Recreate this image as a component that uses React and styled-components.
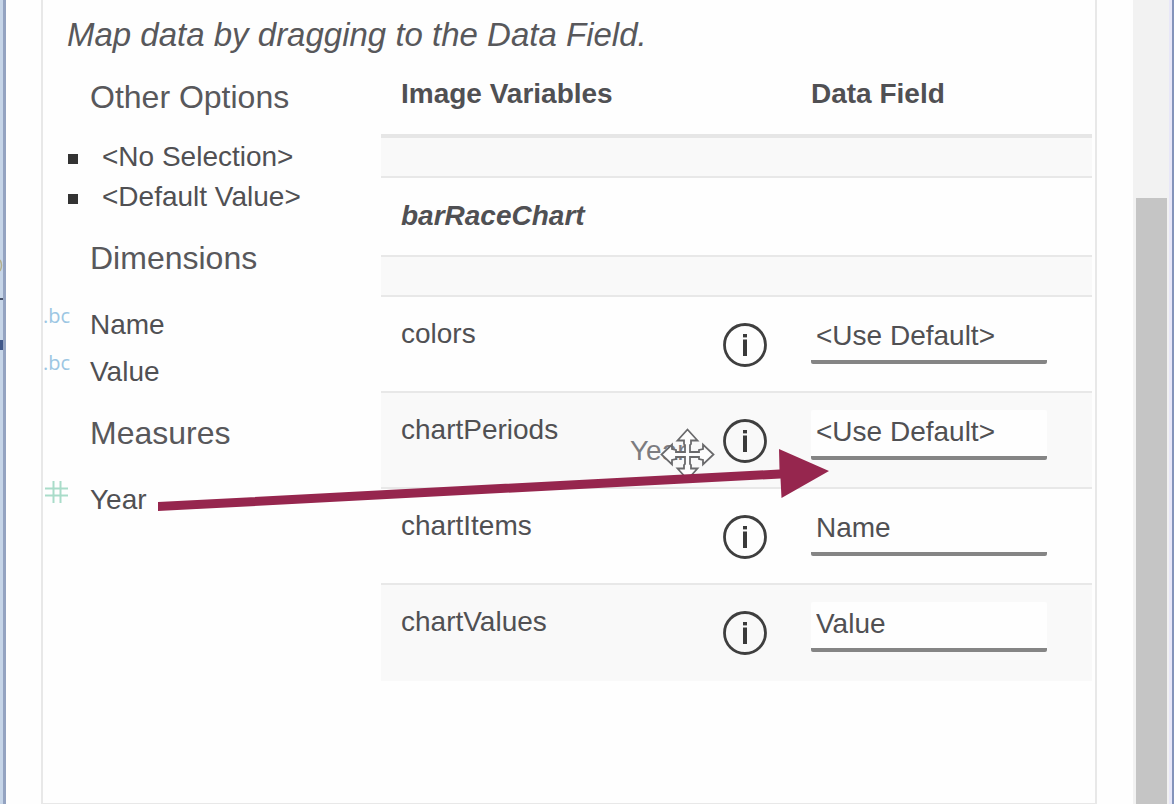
import styled, { createGlobalStyle } from "styled-components";
import { useState } from "react";


// ------- STYLES ---------
const GlobalStyle = createGlobalStyle`
* {
    box-sizing: border-box;
}

body {
    margin: 0;
    background-color: #fefefe;
    color: #505053;
    font-family: "Liberation Sans", Arial, sans-serif;
    font-size: 28px;
    line-height: 40px;
}
`
const Page = styled.div`
display: flex;
min-height: 100vh;
`
const LeftEdge = styled.div`
position: relative;
width: 6px;
background-color: #c6d5e8;
border-right: 3px solid #94a3c1;
`
const RightEdge = styled.div`
width: 5px;
background-color: #e8e7f8;
border-right: 2px solid #8494bb;
`
const Panel = styled.main`
position: relative;
flex: 1;
min-width: 0;
margin: 0 36px 0 35px;
padding: 15px 3px 0 0;
border: 2px solid #e8e8e8;
border-top: none;
border-bottom-width: 1px;
`
const Hint = styled.p`
margin: 0 0 0 24px;
color: #58585b;
font-size: 33px;
font-style: italic;
`
const Columns = styled.div`
display: flex;
align-items: flex-start;
`
const Sidebar = styled.aside`
flex: 0 0 338px;
padding-top: 4px;
`
const GroupTitle = styled.h2`
margin: 18px 0 20px 47px;
color: #58585b;
font-size: 32px;
font-weight: normal;
`
const OptionList = styled.ul`
margin: 0;
padding: 0 0 3px;
list-style: none;
`
const FieldList = styled.ul`
margin: 0;
padding: 3px 0 0;
list-style: none;
`
const Option = styled.li`
display: flex;
align-items: center;
gap: 24px;
padding-left: 25px;

&::before {
    content: "";
    width: 10px;
    height: 10px;
    margin-top: 4px;
    background-color: #333;
}
`
const Field = styled.li`
display: flex;
gap: 21px;
line-height: 47px;
cursor: move;
`
const FieldType = styled.span`
width: 26px;
color: ${props => props.$color};
font-family: "Open Sans", sans-serif;
font-size: 20px;
line-height: 30px;
text-align: right;

svg {
    display: block;
    margin-left: auto;
}
`
const Table = styled.table`
flex: 1;
border-collapse: separate;
border-spacing: 0;
table-layout: fixed;
`
const HeadCell = styled.th`
width: ${props => props.$width || "auto"};
padding: 19px 20px 20px;
border-bottom: 4px solid #e6e6e6;
text-align: left;
`
const Row = styled.tr`
background-color: ${props => props.$shaded ? "#f9f9f9" : "transparent"};

&:last-child td {
    border-bottom-color: transparent;
}
`
const SpacerCell = styled.td`
height: 40px;
padding: 0;
border-bottom: 2px solid #e8e8e8;
`
const GroupCell = styled.th`
padding: 18px 20px 19px;
border-bottom: 2px solid #e8e8e8;
font-style: italic;
text-align: left;
`
const Cell = styled.td`
height: 96px;
padding: ${props => props.$padding || "17px 20px"};
border-bottom: 2px solid #e8e8e8;
vertical-align: top;
`
const InfoButton = styled.button`
display: block;
padding: 0;
border: none;
background: none;
cursor: pointer;

svg {
    display: block;
}
`
const DropInput = styled.input`
display: block;
width: 100%;
height: 50px;
padding: 0 5px 2px;
border: none;
border-bottom: 4px solid #858585;
border-radius: 2px;
background-color: #fefefe;
color: inherit;
font: inherit;
`
const Track = styled.div`
width: 36px;
padding: 198px 2px 0 3px;
background-color: #f2f2f2;
`
const Thumb = styled.div`
height: 100%;
background-color: #c5c5c5;
`
const DragGhost = styled.span`
position: absolute;
top: 431px;
left: 587px;
color: #7c7c80;
`
const Overlay = styled.svg`
position: absolute;
top: 0;
left: 0;
overflow: visible;
pointer-events: none;
`

// -------------------------


const variables = [
    { name: "colors", value: "<Use Default>" },
    { name: "chartPeriods", value: "<Use Default>" },
    { name: "chartItems", value: "Name" },
    { name: "chartValues", value: "Value" },
]

function InfoIcon() {
    return (
        <svg width="44" height="44" viewBox="0 0 44 44">
            <circle cx="22" cy="22" r="20.5" fill="none" stroke="#3f3f3f" strokeWidth="2.8" />
            <rect x="20" y="11" width="4" height="3.4" fill="#3a3a3a" />
            <rect x="20" y="16.5" width="4" height="16.5" fill="#3a3a3a" />
        </svg>
    )
}

function HashIcon() {
    return (
        <svg width="24" height="30" viewBox="0 0 24 30" stroke="#a9dcc9" strokeWidth="2" fill="none">
            <path d="M8.5 5V27M15.5 5V27M0 12.5H23M0 19.5H23" />
        </svg>
    )
}

function App() {
    const [values, setValues] = useState(variables.map((item) => item.value))

    const changeValue = (index, value) => {
        setValues(values.map((old, i) => i === index ? value : old))
    }

    const rows = variables.map((item, index) => (
        <Row key={item.name} $shaded={index % 2 === 1}>
            <Cell><label htmlFor={item.name}>{item.name}</label></Cell>
            <Cell $padding="26px 23px 0">
                <InfoButton type="button" aria-label={"About " + item.name}><InfoIcon /></InfoButton>
            </Cell>
            <Cell $padding="17px 45px 0 20px">
                <DropInput
                    id={item.name}
                    value={values[index]}
                    onChange={(e) => changeValue(index, e.target.value)}
                />
            </Cell>
        </Row>
    ))

    return (
        <Page>
            <GlobalStyle />
            <LeftEdge>
                {/* window behind, showing at the edge */}
                <Overlay width="4" height="360" viewBox="0 0 4 360">
                    <path d="M0 260Q3 265 0 271" fill="none" stroke="#b3b08e" strokeWidth="1.5" />
                    <path d="M0 299H3" stroke="#47536b" strokeWidth="2" />
                    <rect x="0" y="340" width="3" height="10" fill="#405788" />
                </Overlay>
            </LeftEdge>
            <Panel>
                <Hint>Map data by dragging to the Data Field.</Hint>
                <Columns>
                    <Sidebar>
                        <GroupTitle>Other Options</GroupTitle>
                        <OptionList>
                            <Option>&lt;No Selection&gt;</Option>
                            <Option>&lt;Default Value&gt;</Option>
                        </OptionList>
                        <GroupTitle>Dimensions</GroupTitle>
                        <FieldList>
                            <Field><FieldType $color="#9cc6e3">.bc</FieldType>Name</Field>
                            <Field><FieldType $color="#9cc6e3">.bc</FieldType>Value</Field>
                        </FieldList>
                        <GroupTitle>Measures</GroupTitle>
                        <FieldList>
                            <Field><FieldType $color="#a9dcc9"><HashIcon /></FieldType>Year</Field>
                        </FieldList>
                    </Sidebar>
                    <Table>
                        <thead>
                            <tr>
                                <HeadCell>Image Variables</HeadCell>
                                <HeadCell $width="91px" aria-label="Info" />
                                <HeadCell $width="301px">Data Field</HeadCell>
                            </tr>
                        </thead>
                        <tbody>
                            <Row $shaded><SpacerCell colSpan={3} /></Row>
                            <Row><GroupCell colSpan={3}>barRaceChart</GroupCell></Row>
                            <Row $shaded><SpacerCell colSpan={3} /></Row>
                            {rows}
                        </tbody>
                    </Table>
                </Columns>

                <DragGhost>Year</DragGhost>
                <Overlay width="800" height="520" viewBox="43 0 800 520">
                    {/* move cursor */}
                    <path
                        d="M687.5 429.5L697.5 440.5H691V444L690 445V452H699V450L703 449V444.5L713.5 454.5L703 464.5V460L699 459V457H690V464L691 465V468.5H697.5L687.5 479.5L677.5 468.5H684V465L685 464V457H676V459L672 460V464.5L661.5 454.5L672 444.5V449L676 450V452H685V445L684 444V440.5H677.5Z"
                        fill="#fdfdfd"
                        stroke="#6a6a6c"
                        strokeWidth="1.8"
                    />
                    {/* drag arrow */}
                    <path
                        d="M158 502L779.5 469.5L779 449L829 471L781.5 498L780.5 478.5L158 511Z"
                        fill="#96264e"
                    />
                </Overlay>
            </Panel>
            <Track><Thumb /></Track>
            <RightEdge />
        </Page>
    )
}

export default App;
